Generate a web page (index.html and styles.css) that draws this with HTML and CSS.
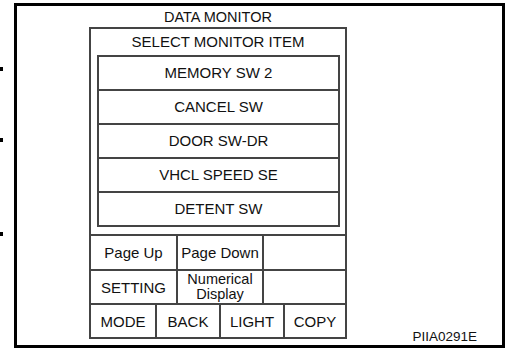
FILE: index.html
```html
<!DOCTYPE html>
<html>
<head>
<meta charset="utf-8">
<link rel="stylesheet" href="styles.css">
</head>
<body>
<div class="page">
  <div class="marks">
    <span class="mark m1"></span>
    <span class="mark m2"></span>
    <span class="mark m3"></span>
  </div>
  <div class="frame">
    <div class="monitor-wrap">
      <div class="title">DATA MONITOR</div>
      <div class="monitor">
        <div class="select-title">SELECT MONITOR ITEM</div>
        <div class="list">
          <div class="item">MEMORY SW 2</div>
          <div class="item">CANCEL SW</div>
          <div class="item">DOOR SW-DR</div>
          <div class="item">VHCL SPEED SE</div>
          <div class="item">DETENT SW</div>
        </div>
        <div class="buttons">
          <div class="brow r1">
            <div class="cell c3a">Page Up</div>
            <div class="cell c3b">Page Down</div>
            <div class="cell c3c"></div>
          </div>
          <div class="brow r2">
            <div class="cell c3a">SETTING</div>
            <div class="cell c3b two"><span class="ln">Numerical</span><span class="ln">Display</span></div>
            <div class="cell c3c"></div>
          </div>
          <div class="brow r3">
            <div class="cell c4a">MODE</div>
            <div class="cell c4b">BACK</div>
            <div class="cell c4c">LIGHT</div>
            <div class="cell c4d">COPY</div>
          </div>
        </div>
      </div>
    </div>
    <div class="side">
      <div class="code">PIIA0291E</div>
    </div>
  </div>
</div>
</body>
</html>
```
FILE: styles.css
```css
html, body {
  margin: 0;
  padding: 0;
  background: #fff;
}
body {
  font-family: "Liberation Sans", Arial, sans-serif;
  color: #111;
  font-size: 15px;
}
.page {
  display: flex;
  width: 505px;
  height: 350px;
}
.marks {
  width: 14px;
  display: flex;
  flex-direction: column;
}
.mark {
  display: block;
  width: 3px;
  height: 4px;
  background: #000;
}
.m1 { margin-top: 67px; }
.m2 { margin-top: 67px; }
.m3 { margin-top: 90px; }

.frame {
  margin-top: 3px;
  width: 485px;
  height: 339px;
  border: 3px solid #000;
  display: flex;
}
.monitor-wrap {
  margin-left: 72px;
  width: 258px;
  display: flex;
  flex-direction: column;
}
.title {
  height: 21px;
  line-height: 21px;
  text-align: center;
  padding-top: 1px;
  box-sizing: border-box;
  font-size: 14.5px;
}
.monitor {
  border: 2px solid #444;
  display: flex;
  flex-direction: column;
}
.select-title {
  height: 26px;
  line-height: 26px;
  text-align: center;
}
.list {
  margin: 0 5px 7px 6px;
  border: 2px solid #444;
}
.item {
  height: 32px;
  line-height: 32px;
  text-align: center;
}
.item + .item {
  border-top: 2px solid #444;
}
.buttons {
  border-top: 2px solid #444;
}
.brow {
  display: flex;
}
.brow + .brow {
  border-top: 2px solid #444;
}
.r1 { height: 33px; }
.r2 { height: 32px; }
.r3 { height: 32px; }
.cell {
  display: flex;
  align-items: center;
  justify-content: center;
  text-align: center;
  box-sizing: border-box;
}
.cell + .cell {
  border-left: 2px solid #444;
}
.two {
  flex-direction: column;
}
.ln {
  display: block;
  line-height: 15px;
  font-size: 14.5px;
}
.c3a { width: 85px; }
.c3b { width: 86px; }
.c3c { width: 83px; }
.c4a { width: 64px; }
.c4b { width: 64px; }
.c4c { width: 64px; }
.c4d { width: 62px; }

.side {
  flex: 1;
  display: flex;
  align-items: flex-end;
  justify-content: flex-end;
  padding-right: 25px;
}
.code {
  font-size: 13.5px;
  line-height: 16px;
}
```
